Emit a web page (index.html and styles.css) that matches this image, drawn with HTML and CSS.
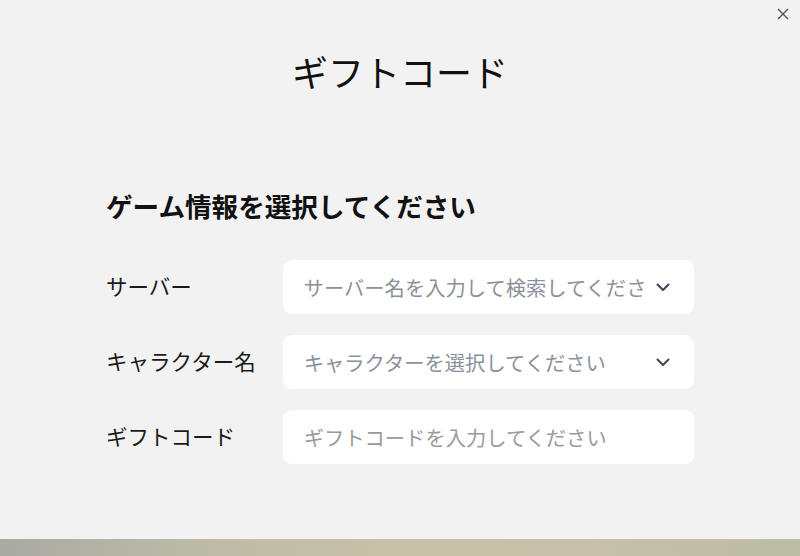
FILE: index.html
```html
<!DOCTYPE html>
<html lang="ja">
<head>
<meta charset="utf-8">
<link rel="stylesheet" href="styles.css">
</head>
<body>
<div class="page">
  <div class="modal">
    <button class="close" aria-label="閉じる">
      <svg width="12" height="12" viewBox="0 0 12 12"><path d="M1 1L11 11M11 1L1 11" stroke="#555" stroke-width="1.4" fill="none"/></svg>
    </button>
    <h1 class="title">ギフトコード</h1>
    <section class="content">
      <h2 class="heading">ゲーム情報を選択してください</h2>
      <div class="form">
        <div class="row">
          <div class="label">サーバー</div>
          <div class="field select">
            <span class="ph ph-select">サーバー名を入力して検索してくださ</span>
            <svg class="chev" width="14" height="9" viewBox="0 0 14 9"><path d="M1.5 1.5L7 7L12.5 1.5" stroke="#3b4556" stroke-width="2" fill="none" stroke-linecap="round" stroke-linejoin="round"/></svg>
          </div>
        </div>
        <div class="row">
          <div class="label">キャラクター名</div>
          <div class="field select">
            <span class="ph ph-select">キャラクターを選択してください</span>
            <svg class="chev" width="14" height="9" viewBox="0 0 14 9"><path d="M1.5 1.5L7 7L12.5 1.5" stroke="#3b4556" stroke-width="2" fill="none" stroke-linecap="round" stroke-linejoin="round"/></svg>
          </div>
        </div>
        <div class="row">
          <div class="label">ギフトコード</div>
          <div class="field">
            <span class="ph ph-input">ギフトコードを入力してください</span>
          </div>
        </div>
      </div>
    </section>
  </div>
  <div class="strip"></div>
</div>
</body>
</html>
```
FILE: styles.css
```css
html, body {
  margin: 0;
  padding: 0;
}
body {
  font-family: "Noto Sans CJK JP", "Noto Sans", sans-serif;
  background: #f2f2f2;
}
.page {
  width: 800px;
  height: 556px;
  display: flex;
  flex-direction: column;
  overflow: hidden;
}
.modal {
  position: relative;
  height: 539px;
  background: #f2f2f2;
}
.close {
  position: absolute;
  top: 7px;
  right: 10px;
  width: 14px;
  height: 14px;
  padding: 0;
  border: 0;
  background: none;
  display: flex;
  align-items: center;
  justify-content: center;
}
.title {
  margin: 46px 0 0;
  text-align: center;
  font-size: 36px;
  line-height: 50px;
  font-weight: 400;
  color: #111;
}
.content {
  padding: 0 106px 0 106px;
}
.heading {
  margin: 92px 0 0;
  font-size: 26.6px;
  line-height: 36px;
  font-weight: 700;
  color: #111;
}
.form {
  margin-top: 36px;
  display: flex;
  flex-direction: column;
  gap: 21px;
}
.row {
  display: flex;
  align-items: center;
  height: 54px;
}
.label {
  width: 177px;
  font-size: 21.5px;
  color: #1a1a1a;
  padding-bottom: 4px;
}
.field {
  width: 412px;
  height: 54px;
  box-sizing: border-box;
  background: #fff;
  border-radius: 9px;
  display: flex;
  align-items: center;
  padding: 0 24px 0 21px;
}
.ph {
  flex: 1;
  font-size: 20.3px;
  white-space: nowrap;
  overflow: hidden;
  padding-bottom: 1px;
}
.ph-select {
  color: #8b919c;
}
.ph-input {
  color: #9a9a9a;
}
.chev {
  flex: none;
  margin-left: 8px;
}
.strip {
  height: 17px;
  background: linear-gradient(90deg, #a9aaa3 0%, #bdbba8 25%, #c6c1a7 50%, #c4c0a9 75%, #bdbca5 100%);
}
```
